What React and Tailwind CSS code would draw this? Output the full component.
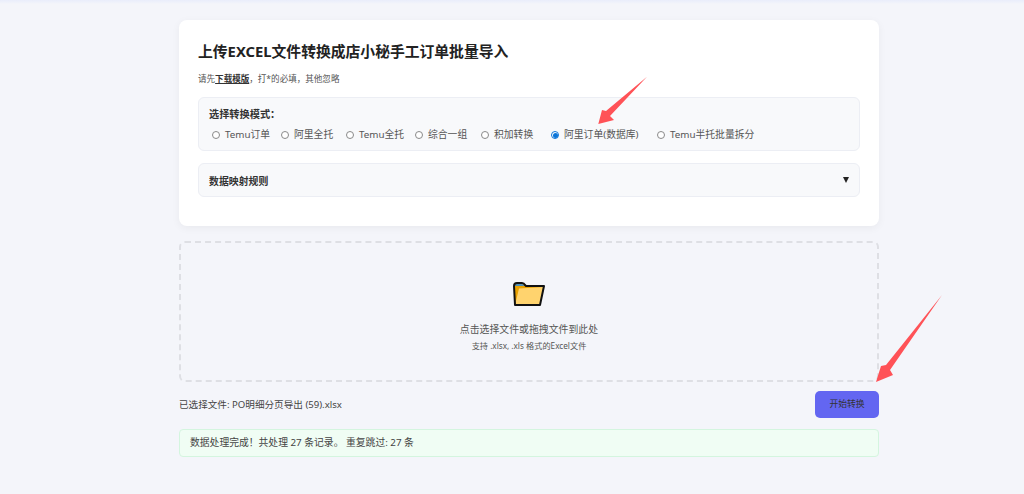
import React from "react";

const modes = [
  { label: "Temu订单", w: "w-[69px]" },
  { label: "阿里全托", w: "w-[65px]" },
  { label: "Temu全托", w: "w-[69px]" },
  { label: "综合一组", w: "w-[66px]" },
  { label: "积加转换", w: "w-[70px]" },
  { label: "阿里订单(数据库)", w: "w-[106px]", checked: true },
  { label: "Temu半托批量拆分", w: "w-[110px]" },
];

function Radio({ label, w, checked }) {
  return (
    <label className={`flex items-center gap-[5px] ${w} shrink-0 text-[9.8px] text-[#555] whitespace-nowrap`}>
      {checked ? (
        <span className="w-[8px] h-[8px] rounded-full border border-[#0b75d8] bg-white flex items-center justify-center shrink-0">
          <span className="w-[5px] h-[5px] rounded-full bg-[#0b75d8]" />
        </span>
      ) : (
        <span className="w-[8px] h-[8px] rounded-full border border-[#8a8a8a] bg-white shrink-0" />
      )}
      <span>{label}</span>
    </label>
  );
}

export default function App() {
  return (
    <div
      className="relative w-[1024px] h-[494px] overflow-hidden bg-[#f4f5fa] text-[#333]"
      style={{ fontFamily: '"Noto Sans", "Noto Sans CJK SC", sans-serif' }}
    >
      <div className="h-[4px] bg-gradient-to-b from-[#e9edfb] to-[#f4f5fa]" />
      <div className="w-[700px] ml-[179px] mt-[16px]">
        {/* Top card */}
        <div className="h-[206px] bg-white rounded-[8px] px-[19px] pt-[20px] shadow-[0_2px_8px_rgba(0,0,0,0.05)]">
          <h1 className="text-[14.8px] leading-[22px] font-bold text-[#222]">上传EXCEL文件转换成店小秘手工订单批量导入</h1>
          <p className="mt-[11px] text-[8.55px] leading-[12px] text-[#555]">
            请先<span className="font-bold text-[#333] underline">下载模版</span>，打*的必填，其他忽略
          </p>

          <div className="mt-[12px] h-[54px] bg-[#f8f9fb] border border-[#eceef4] rounded-[6px] pl-[10px] pt-[9px]">
            <div className="text-[10.2px] leading-[14px] font-bold text-[#333]">选择转换模式：</div>
            <div className="flex items-center mt-[6px] pl-[3px] h-[16px]">
              {modes.map((m) => (
                <Radio key={m.label} {...m} />
              ))}
            </div>
          </div>

          <div className="mt-[12px] h-[34px] bg-[#f8f9fb] border border-[#eceef4] rounded-[6px] pl-[10px] pr-[10px] flex items-center justify-between">
            <span className="text-[9.9px] font-bold text-[#333] pt-[2px]">数据映射规则</span>
            <span className="w-0 h-0 border-l-[3.5px] border-r-[3.5px] border-t-[6px] border-l-transparent border-r-transparent border-t-[#222]" />
          </div>
        </div>

        {/* Drop zone */}
        <div className="mt-[15px] h-[141px] border-2 border-dashed border-[#dedfe4] rounded-[6px] flex flex-col items-center pt-[38px]">
          <svg width="34" height="26" viewBox="0 0 34 26">
            <path d="M3 24 L2 5 Q2 2 5 2 L10 2 Q12 2 13 4 L14 5 L32 5 L28 24 Z" fill="#e9a100" />
            <path d="M3 4 Q3 3 5 3 L10 3 Q12 3 12.5 5 L3 5 Z" fill="#4f90b8" />
            <path d="M7 7.5 L32 6 L28 24 L3 24 Z" fill="#ffd36e" />
            <path d="M3 24 L2 5 Q2 2 5 2 L10 2 Q12 2 13 4 L14 5 L32 5 L28 24 Z" fill="none" stroke="#111" strokeWidth="2" strokeLinejoin="round" />
          </svg>
          <div className="mt-[15px] text-[9.9px] leading-[14px] text-[#555]">点击选择文件或拖拽文件到此处</div>
          <div className="mt-[4px] text-[8.2px] leading-[12px] text-[#555]">支持 .xlsx, .xls 格式的Excel文件</div>
        </div>

        {/* File row */}
        <div className="mt-[9px] flex items-center justify-between">
          <span className="text-[9.6px] text-[#444] pt-[2px]">已选择文件: PO明细分页导出 (59).xlsx</span>
          <button className="w-[64px] h-[27px] rounded-[5px] bg-[#6366f1] text-[8.8px] text-[#333]">开始转换</button>
        </div>

        {/* Result */}
        <div className="mt-[11px] h-[28px] bg-[#f0fdf4] border border-[#d4f5df] rounded-[4px] pl-[10px] flex items-center text-[9.8px] text-[#444]">
          数据处理完成！共处理 27 条记录。 重复跳过: 27 条
        </div>
      </div>

      {/* Annotation arrows */}
      <svg className="absolute left-[590px] top-[70px] w-[65px] h-[60px]" viewBox="590 70 65 60">
        <polygon points="647,76.7 606,111 602,110 598.3,124 614,120 610,116" fill="#ff5257" />
      </svg>
      <svg className="absolute left-[870px] top-[290px] w-[78px] h-[96px]" viewBox="870 290 78 96">
        <polygon points="942,295 886,365 881,366 876,382 893,375 890,370" fill="#ff5257" />
      </svg>
    </div>
  );
}
